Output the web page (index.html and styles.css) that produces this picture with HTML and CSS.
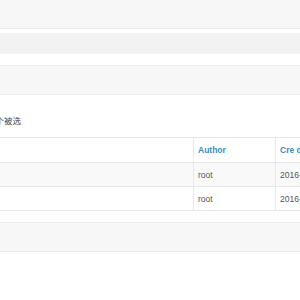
FILE: index.html
```html
<!DOCTYPE html>
<html>
<head>
<meta charset="utf-8">
<link rel="stylesheet" href="styles.css">
</head>
<body>
<div class="band band-top"></div>
<div class="band band-mid"></div>
<div class="band band-third"></div>
<div class="content">
  <div class="selected">已有 2 个被选</div>
  <table class="grid">
    <thead>
      <tr><th class="c-title"></th><th class="c-author">Author</th><th class="c-date">Cre d</th></tr>
    </thead>
    <tbody>
      <tr class="odd"><td></td><td>root</td><td>2016-</td></tr>
      <tr><td></td><td>root</td><td>2016-</td></tr>
    </tbody>
  </table>
</div>
<div class="band band-bottom"></div>
</body>
</html>
```
FILE: styles.css
```css
html, body {
  margin: 0;
  padding: 0;
  background: #fff;
  overflow: hidden;
  font-family: "Liberation Sans", Arial, "Noto Sans CJK SC", sans-serif;
  width: 300px;
  height: 300px;
}
.band { width: 100%; }
.band-top {
  height: 28px;
  background: #f7f7f7;
  border-bottom: 1px solid #ececec;
}
.band-mid {
  margin-top: 4px;
  height: 21px;
  background: #f2f2f2;
}
.band-third {
  margin-top: 11px;
  height: 28px;
  background: #f7f7f7;
  border-top: 1px solid #ededed;
  border-bottom: 1px solid #ededed;
}
.content {
  overflow: hidden;
}
.selected {
  margin: 20px 0 0 -31px;
  height: 12px;
  line-height: 12px;
  font-size: 8.5px;
  color: #444;
  white-space: nowrap;
}
.grid {
  margin: 10px 0 0 -10px;
  border-collapse: collapse;
  width: 340px;
  table-layout: fixed;
  font-size: 8.5px;
}
.grid th, .grid td {
  border: 1px solid #e8e8e8;
  text-align: left;
  padding: 0 4px;
  white-space: nowrap;
  overflow: hidden;
}
.grid th { height: 24px; color: #3c8dbc; font-weight: bold; }
.grid td { height: 23px; color: #555; }
.c-title { width: 194px; }
.c-author { width: 73px; }
.c-date { width: 73px; }
.grid tr.odd td { background: #f9f9f9; }
.band-bottom {
  margin-top: 11px;
  height: 28px;
  background: #f7f7f7;
  border-top: 1px solid #ededed;
  border-bottom: 1px solid #ededed;
}
```
